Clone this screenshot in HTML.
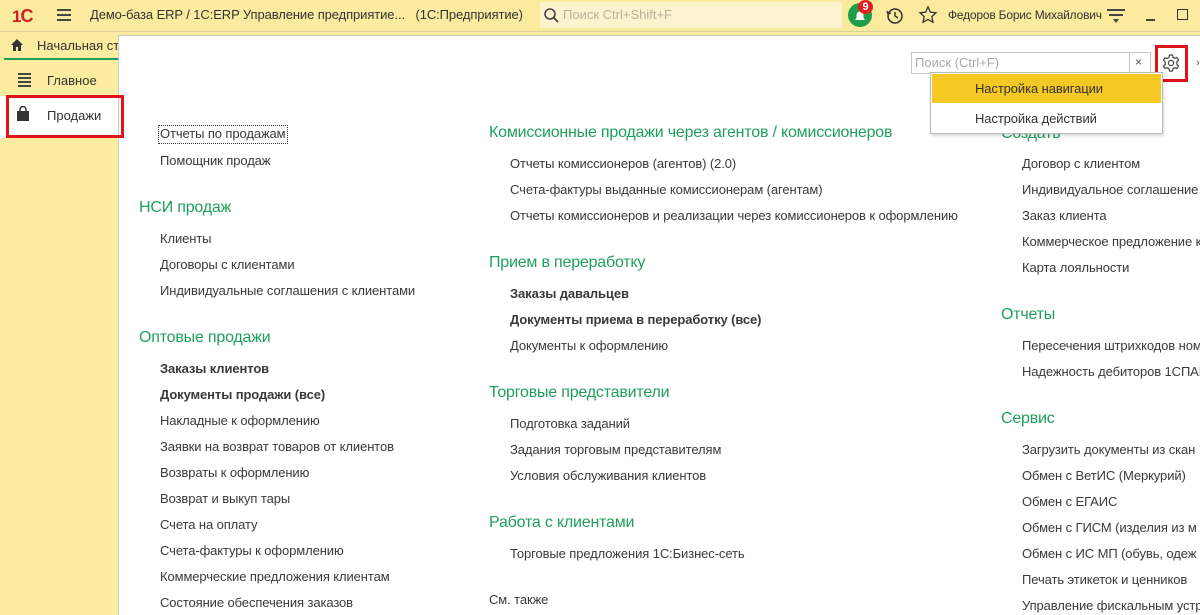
<!DOCTYPE html>
<html><head><meta charset="utf-8"><style>
*{margin:0;padding:0;box-sizing:border-box}
body{width:1200px;height:615px;overflow:hidden;position:relative;font-family:"Liberation Sans",Arial,sans-serif;background:#fbeca0;color:#333}
.a{position:absolute;white-space:nowrap}
.l{font-size:13px;line-height:16px;color:#3a3a3a;letter-spacing:-0.1px}
.b{font-weight:bold}
.h{font-size:16px;line-height:20px;color:#1f9f5d;letter-spacing:-0.2px}
</style></head><body>
<div class="a" style="left:0;top:0;width:1200px;height:32px;background:#fbeb9e;border-bottom:1px solid #d8cf9a"></div>
<div class="a" style="left:12px;top:6px;font-size:17px;font-weight:bold;color:#d0202a;letter-spacing:-1px">1<span style="font-size:18px">C</span></div>
<div class="a" style="left:57px;top:9px;width:14px;height:2px;background:#444;box-shadow:0 5px 0 #444,0 10px 0 #444"></div>
<div class="a" style="left:90px;top:7px;font-size:13px;color:#333;letter-spacing:-0.1px">Демо-база ERP / 1С:ERP Управление предприятие...&nbsp;&nbsp;&nbsp;(1С:Предприятие)</div>
<div class="a" style="left:540px;top:2px;width:302px;height:26px;background:#fdf4cf"></div>
<svg class="a" style="left:543px;top:7px" width="16" height="16"><circle cx="7" cy="7" r="5" fill="none" stroke="#444" stroke-width="1.6"/><path d="M10.5 10.5L15 15" stroke="#444" stroke-width="1.8"/></svg>
<div class="a" style="left:563px;top:7px;font-size:13px;color:#b8b19a">Поиск Ctrl+Shift+F</div>
<div class="a" style="left:848px;top:3px;width:24px;height:24px;border-radius:50%;background:#1e9e48"></div>
<svg class="a" style="left:852px;top:8px" width="16" height="16"><path d="M3 12h10l-1.5-2V7a3.5 3.5 0 0 0-7 0v3z" fill="#fff"/></svg>
<div class="a" style="left:858px;top:0;width:15px;height:14px;border-radius:50%;background:#e02020;color:#fff;font-size:11px;font-weight:bold;text-align:center;line-height:14px">9</div>
<svg class="a" style="left:885px;top:6px" width="20" height="20"><circle cx="10" cy="10" r="7" fill="none" stroke="#333" stroke-width="1.5"/><path d="M10 6v4l3 2" stroke="#333" fill="none" stroke-width="1.5"/><path d="M2 5l1 3 3-1" stroke="#333" fill="none" stroke-width="1.3"/></svg>
<svg class="a" style="left:918px;top:5px" width="20" height="20"><path d="M10 2l2.4 5.2 5.6.6-4.2 3.8 1.2 5.6L10 14.4 5 17.2l1.2-5.6L2 7.8l5.6-.6z" fill="none" stroke="#333" stroke-width="1.3"/></svg>
<div class="a" style="left:948px;top:8px;font-size:12px;color:#333;letter-spacing:-0.2px">Федоров Борис Михайлович</div>
<div class="a" style="left:1107px;top:9px;width:18px;height:2px;background:#444"></div>
<div class="a" style="left:1109px;top:14px;width:14px;height:2px;background:#444"></div>
<div class="a" style="left:1113px;top:19px;width:0;height:0;border:3px solid transparent;border-top:4px solid #444"></div>
<div class="a" style="left:1146px;top:19px;width:9px;height:2px;background:#444"></div>
<div class="a" style="left:1177px;top:9px;width:11px;height:11px;border:1.5px solid #333"></div>
<div class="a" style="left:0;top:33px;width:1200px;height:30px;background:#fbeca0"></div>
<svg class="a" style="left:10px;top:38px" width="14" height="14"><path d="M7 1L1 7h2v6h3V9h2v4h3V7h2z" fill="#333"/></svg>
<div class="a" style="left:37px;top:38px;font-size:13px;color:#333">Начальная ст</div>
<div class="a" style="left:4px;top:58px;width:114px;height:2px;background:#1f9f5d"></div>
<svg class="a" style="left:17px;top:72px" width="16" height="16"><path d="M1 2h13M1 6h13M1 10h13M1 14h13" stroke="#444" stroke-width="2"/></svg>
<div class="a" style="left:47px;top:73px;font-size:13px;color:#333">Главное</div>
<div class="a" style="left:0;top:96px;width:118px;height:42px;background:#fff"></div>
<svg class="a" style="left:16px;top:106px" width="14" height="16"><path d="M4 5V3.5a3 3 0 0 1 6 0V5" stroke="#333" fill="none" stroke-width="1.5"/><path d="M1 5h12v10H1z" fill="#333"/></svg>
<div class="a" style="left:47px;top:108px;font-size:13px;color:#333">Продажи</div>
<div class="a" style="left:118px;top:35px;width:1082px;height:580px;background:#fff;border-left:1px solid #c9c9c9;border-top:1px solid #c9c9c9"></div>
<div class="a" style="left:6px;top:95px;width:118px;height:43px;border:3px solid #e0121a"></div>
<div class="a" style="left:911px;top:52px;width:240px;height:22px;border:1px solid #c8c8c8;background:#fff"></div>
<div class="a" style="left:1129px;top:52px;width:1px;height:22px;background:#c8c8c8"></div>
<div class="a" style="left:915px;top:55px;font-size:13px;color:#aaa">Поиск (Ctrl+F)</div>
<div class="a" style="left:1135px;top:55px;font-size:12px;color:#555">×</div>
<div class="a" style="left:1155px;top:45px;width:33px;height:37px;border:3px solid #e0121a"></div>
<svg class="a" style="left:1162px;top:54px" width="18" height="18" viewBox="0 0 18 18"><path d="M7.5 1h3l.5 2.3 1.8 1 2.2-.8 1.5 2.6-1.7 1.6v2.6l1.7 1.6-1.5 2.6-2.2-.8-1.8 1-.5 2.3h-3l-.5-2.3-1.8-1-2.2.8L1.5 12.2l1.7-1.6V7.9L1.5 6.3 3 3.7l2.2.8 1.8-1z" fill="none" stroke="#444" stroke-width="1.2"/><circle cx="9" cy="9" r="2.6" fill="none" stroke="#444" stroke-width="1.2"/></svg>
<div class="a" style="left:1196px;top:57px;font-size:11px;color:#555">›</div>
<div class="a" style="left:158px;top:125px;width:130px;height:19px;border:1px dotted #333"></div>
<div class="a l" style="left:160px;top:126px">Отчеты по продажам</div>
<div class="a l" style="left:160px;top:153px">Помощник продаж</div>
<div class="a h" style="left:139px;top:198px">НСИ продаж</div>
<div class="a l" style="left:160px;top:231px">Клиенты</div>
<div class="a l" style="left:160px;top:257px">Договоры с клиентами</div>
<div class="a l" style="left:160px;top:283px">Индивидуальные соглашения с клиентами</div>
<div class="a h" style="left:139px;top:328px">Оптовые продажи</div>
<div class="a l b" style="left:160px;top:361px">Заказы клиентов</div>
<div class="a l b" style="left:160px;top:387px">Документы продажи (все)</div>
<div class="a l" style="left:160px;top:413px">Накладные к оформлению</div>
<div class="a l" style="left:160px;top:439px">Заявки на возврат товаров от клиентов</div>
<div class="a l" style="left:160px;top:465px">Возвраты к оформлению</div>
<div class="a l" style="left:160px;top:491px">Возврат и выкуп тары</div>
<div class="a l" style="left:160px;top:517px">Счета на оплату</div>
<div class="a l" style="left:160px;top:543px">Счета-фактуры к оформлению</div>
<div class="a l" style="left:160px;top:569px">Коммерческие предложения клиентам</div>
<div class="a l" style="left:160px;top:595px">Состояние обеспечения заказов</div>
<div class="a h" style="left:489px;top:123px">Комиссионные продажи через агентов / комиссионеров</div>
<div class="a l" style="left:510px;top:156px">Отчеты комиссионеров (агентов) (2.0)</div>
<div class="a l" style="left:510px;top:182px">Счета-фактуры выданные комиссионерам (агентам)</div>
<div class="a l" style="left:510px;top:208px">Отчеты комиссионеров и реализации через комиссионеров к оформлению</div>
<div class="a h" style="left:489px;top:253px">Прием в переработку</div>
<div class="a l b" style="left:510px;top:286px">Заказы давальцев</div>
<div class="a l b" style="left:510px;top:312px">Документы приема в переработку (все)</div>
<div class="a l" style="left:510px;top:338px">Документы к оформлению</div>
<div class="a h" style="left:489px;top:383px">Торговые представители</div>
<div class="a l" style="left:510px;top:416px">Подготовка заданий</div>
<div class="a l" style="left:510px;top:442px">Задания торговым представителям</div>
<div class="a l" style="left:510px;top:468px">Условия обслуживания клиентов</div>
<div class="a h" style="left:489px;top:513px">Работа с клиентами</div>
<div class="a l" style="left:510px;top:546px">Торговые предложения 1С:Бизнес-сеть</div>
<div class="a l" style="left:489px;top:592px">См. также</div>
<div class="a h" style="left:1001px;top:124px">Создать</div>
<div class="a l" style="left:1022px;top:156px">Договор с клиентом</div>
<div class="a l" style="left:1022px;top:182px">Индивидуальное соглашение</div>
<div class="a l" style="left:1022px;top:208px">Заказ клиента</div>
<div class="a l" style="left:1022px;top:234px">Коммерческое предложение к</div>
<div class="a l" style="left:1022px;top:260px">Карта лояльности</div>
<div class="a h" style="left:1001px;top:305px">Отчеты</div>
<div class="a l" style="left:1022px;top:338px">Пересечения штрихкодов ном</div>
<div class="a l" style="left:1022px;top:364px">Надежность дебиторов 1СПАР</div>
<div class="a h" style="left:1001px;top:409px">Сервис</div>
<div class="a l" style="left:1022px;top:442px">Загрузить документы из скан</div>
<div class="a l" style="left:1022px;top:468px">Обмен с ВетИС (Меркурий)</div>
<div class="a l" style="left:1022px;top:494px">Обмен с ЕГАИС</div>
<div class="a l" style="left:1022px;top:520px">Обмен с ГИСМ (изделия из м</div>
<div class="a l" style="left:1022px;top:546px">Обмен с ИС МП (обувь, одеж</div>
<div class="a l" style="left:1022px;top:572px">Печать этикеток и ценников</div>
<div class="a l" style="left:1022px;top:598px">Управление фискальным устр</div>
<div class="a" style="left:930px;top:72px;width:233px;height:62px;border:1px solid #bbb;background:#fff;box-shadow:1px 2px 3px rgba(0,0,0,.15)"></div>
<div class="a" style="left:932px;top:74px;width:229px;height:29px;background:#f5c824"></div>
<div class="a l" style="left:975px;top:81px;color:#333">Настройка навигации</div>
<div class="a l" style="left:975px;top:111px;color:#333">Настройка действий</div>
</body></html>
